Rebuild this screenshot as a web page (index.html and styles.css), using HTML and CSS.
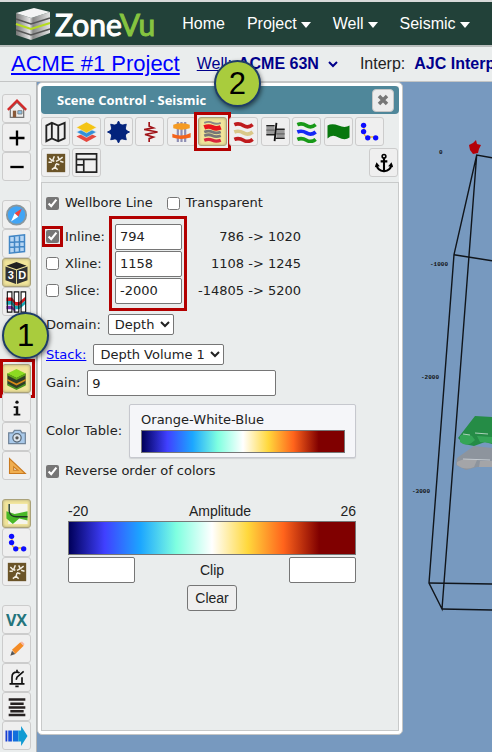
FILE: index.html
```html
<!DOCTYPE html>
<html lang="en">
<head>
    <meta charset="UTF-8">
    <meta name="viewport" content="width=device-width, initial-scale=1.0">
    <title>ZoneVu - ACME #1 Project</title>
    <link rel="stylesheet" href="styles.css">
</head>
<body>
    <!-- Shared icons -->
    <svg class="sprite" aria-hidden="true">
        <symbol id="icon-path" viewBox="0 0 24 24">
            <path d="M6 5v6q0 7 5 7h9" fill="none" stroke="#f0b429" stroke-width="1.6"/>
            <g fill="#0d0dff"><circle cx="5.500" cy="4" r="3.200"/><circle cx="5.500" cy="11.500" r="3.200"/><circle cx="10.500" cy="19" r="3.200"/><circle cx="20" cy="19" r="3.200"/></g>
        </symbol>
        <symbol id="icon-fault" viewBox="0 0 24 24">
            <rect x="1" y="1" width="22" height="22" fill="#6b5428"/>
            <path d="M4 6l3 3 3 1M10 4L8 9M3 11h4M20 5l-4 3-4 2M14 4l2 4M21 11l-4-1M12 13l-1 4-4 3M11 17l3 3M12 13l4 1" fill="none" stroke="#f3eee2" stroke-width="1.800"/>
        </symbol>
    </svg>

    <header class="navbar">
        <a class="logo" href="#">
            <svg width="36" height="34" viewBox="0 0 36 34" aria-hidden="true">
                <defs>
                    <linearGradient id="slab" x1="0" x2="1"><stop offset="0" stop-color="#777"/><stop offset=".4" stop-color="#e4e4e4"/><stop offset=".5" stop-color="#888"/><stop offset="1" stop-color="#e4e4e4"/></linearGradient>
                </defs>
                <path d="M1 6v22l15 5 19-7V5L16 11z" fill="url(#slab)"/>
                <path d="M1 6L19 1l16 4-19 6z" fill="#f4f4f4"/>
                <path d="M1 12l15 5 19-6M1 23l15 5 19-6" fill="none" stroke="#555" stroke-width="1.500"/>
                <path d="M1 17l15 5 19-6" fill="none" stroke="#b5dc1e" stroke-width="2"/>
            </svg>
            <span class="logo-text">Zone<span class="logo-accent">Vu</span></span>
        </a>
        <nav class="menu">
            <a href="#">Home</a>
            <button type="button">Project<span class="caret"></span></button>
            <button type="button">Well<span class="caret"></span></button>
            <button type="button">Seismic<span class="caret"></span></button>
        </nav>
    </header>

    <div class="project-bar">
        <a class="project-link" href="#">ACME #1 Project</a>
        <a class="well-link" href="#">Well:</a>
        <button class="picker" type="button">ACME 63N
            <svg width="12" height="8" viewBox="0 0 12 8" aria-hidden="true"><path d="M2 2l4 4 4-4" fill="none" stroke="#00008b" stroke-width="2"/></svg>
        </button>
        <span class="interp">Interp:</span>
        <button class="picker" type="button">AJC Interp</button>
    </div>

    <main class="workspace">
        <aside class="sidebar" aria-label="Scene tools">
            <div class="tool-group">
                <button class="tool" type="button" aria-label="Home view">
                    <svg viewBox="0 0 24 24"><path d="M4 12v10h16V12l-8-8z" fill="#eee" stroke="#777" stroke-width="1.500"/><path d="M1 13L12 2l11 11" fill="none" stroke="#d32a2a" stroke-width="2.800"/><path d="M7 14h4v8H7z" fill="#8a5a3a"/><path d="M13 14h5v4h-5z" fill="#8cc4e8" stroke="#777"/></svg>
                </button>
                <button class="tool" type="button" aria-label="Zoom in">
                    <svg viewBox="0 0 24 24"><path d="M3 12h18M12 3v18" stroke="#000" stroke-width="2.800"/></svg>
                </button>
                <button class="tool" type="button" aria-label="Zoom out">
                    <svg viewBox="0 0 24 24"><path d="M4 12h16" stroke="#000" stroke-width="2.800"/></svg>
                </button>
            </div>
            <div class="tool-group">
                <button class="tool" type="button" aria-label="Compass">
                    <svg class="wide" viewBox="0 0 24 24"><circle cx="12" cy="12" r="10.500" fill="#42a5f5" stroke="#8a979e" stroke-width="2"/><path d="M18 5l-4 9-4-4z" fill="#f4433c"/><path d="M6 19l4-9 4 4z" fill="#fff"/></svg>
                </button>
                <button class="tool" type="button" aria-label="Section grid">
                    <svg viewBox="0 0 24 24"><path d="M3 3l18-2v20L3 23zM9 3v19M15 2v19M3 10l18-1M3 16l18-1" fill="#b8d6f3" stroke="#4286c5" stroke-width="1.800"/></svg>
                </button>
                <button class="tool active" type="button" aria-label="3D view">
                    <svg class="wide" viewBox="0 0 24 24"><path d="M12 0l11 4-11 4L1 4z" fill="#222"/><path d="M0 5l11.500 4v15L0 20zM24 5L12.500 9v15L24 20z" fill="#2f3133"/><text x="2.500" y="19" class="cube-text">3</text><text x="14" y="19" class="cube-text">D</text></svg>
                </button>
                <button class="tool" type="button" aria-label="Correlation">
                    <svg class="wide" viewBox="0 0 24 24"><path d="M2 1h5v22H2zM9.500 1h5v22h-5zM17 1h5v22h-5z" fill="#fff"/><path d="M1 7h6l4 5h4l7-6v4l-7 6h-4l-4-5H1z" fill="#d4161c"/><path d="M1 11h6l4 5h4l7-6v4l-7 6h-4l-4-5H1z" fill="#18a7b5"/><path d="M1 16h6l4 4v3L7 20H1z" fill="#7b35b0"/><path d="M2 1h5v22H2zM9.500 1h5v22h-5zM17 1h5v22h-5z" fill="none" stroke="#111" stroke-width="1.200"/></svg>
                </button>
            </div>
            <div class="tool-group below-callout">
                <button class="tool active highlight" type="button" aria-label="Scene control">
                    <svg class="wide" viewBox="0 0 24 24"><path d="M2 6v12l10 5 10-5V6z" fill="#2f3d27"/><path d="M2 12l10 5 10-5v2l-10 5-10-5z" fill="#d58918"/><path d="M2 17l10 5 10-5v2l-10 5-10-5z" fill="#4c9420"/><path d="M2 6l10-5 10 5-10 5z" fill="#8cdb21"/><path d="M2 6l10 5 10-5v2l-10 5L2 8z" fill="#64a818"/></svg>
                    <span class="callout callout-1">1</span>
                </button>
                <button class="tool" type="button" aria-label="Info">
                    <svg viewBox="0 0 24 24"><circle cx="12" cy="5" r="2" fill="#111"/><path d="M8 10h5.500v9H16v2H8v-2h2.500v-7H8z" fill="#111"/></svg>
                </button>
                <button class="tool" type="button" aria-label="Snapshot">
                    <svg viewBox="0 0 24 24"><path d="M2 7h5l2-3h7l2 3h4v13H2z" fill="#a9c9ea" stroke="#71859a" stroke-width="1.500"/><circle cx="12" cy="13" r="5" fill="#dbe4ec" stroke="#596978" stroke-width="1.500"/><circle cx="12" cy="13" r="2" fill="#555"/></svg>
                </button>
                <button class="tool" type="button" aria-label="Measure">
                    <svg viewBox="0 0 24 24"><path d="M3 3v18h19zM8 13v4h5z" fill="#f0ae50" stroke="#ca7a20" stroke-width="1.300" fill-rule="evenodd"/></svg>
                </button>
            </div>
            <div class="tool-group">
                <button class="tool active" type="button" aria-label="Surfaces">
                    <svg class="wide" viewBox="0 0 24 24"><path d="M3 1h21v22H3z" fill="#f5f4ec"/><path d="M1 9l9 3 14-3v10l-9-2-7 6-7-6z" fill="#49b828"/><path d="M4 1v8q1 6 8 6h12" fill="none" stroke="#1f3824" stroke-width="1.500"/></svg>
                </button>
                <button class="tool" type="button" aria-label="Well path"><svg><use href="#icon-path"/></svg></button>
                <button class="tool" type="button" aria-label="Faults"><svg><use href="#icon-fault"/></svg></button>
            </div>
            <div class="tool-group">
                <button class="tool vx" type="button">VX</button>
                <button class="tool" type="button" aria-label="Edit">
                    <svg viewBox="0 0 24 24"><path d="M4 20l2-6 4 4z" fill="#555"/><path d="M6 13L16 4l4 4-10 10z" fill="#f48b25"/><path d="M16 4l2-1 3 3-1 2z" fill="#f6b6a8"/></svg>
                </button>
                <button class="tool" type="button" aria-label="Alerts">
                    <svg viewBox="0 0 24 24"><path d="M3 19h18M6 19v-8q0-6 6-6 2 0 3 1M18 11v8M12 2v3M10 22h4M11 14l1-3 8-7" fill="none" stroke="#111" stroke-width="2"/></svg>
                </button>
                <button class="tool" type="button" aria-label="Layers list">
                    <svg viewBox="0 0 24 24"><path d="M2 3h20M4 8h16M2 12.500h20M4 17h16M2 21.500h20" stroke="#272222" stroke-width="3"/></svg>
                </button>
                <button class="tool" type="button" aria-label="Play forward">
                    <svg class="wide" viewBox="0 0 24 24"><path d="M0 6h2v12H0z" fill="#1a3ed0"/><path d="M3 6h4v12H3z" fill="#174ddd"/><path d="M8 6h6v12H8z" fill="#126fdc"/><path d="M14 6h3V1l7 11-7 11v-5h-3z" fill="#119bd3"/></svg>
                </button>
            </div>
        </aside>

        <div class="scene">
            <svg class="scene-view" width="89" height="670" viewBox="0 0 89 670" role="img" aria-label="3D scene">
                <path d="M66 63l4-2 3-3 1 4 4 1-2 4-1 4-5 1-3-4z" fill="#b50008"/>
                <g fill="none" stroke="#10151b" stroke-width="1.400">
                    <path d="M89 75.700L73.700 73 51 172.700 26 501l13 26L73.700 73"/>
                    <path d="M51 172.700l38 6M26 501l63 1M39 527l50 1"/>
                </g>
                <path d="M72 334l17 1v27l-7-2-11 4-10-2-6-6z" fill="#258c46"/>
                <path d="M57 354q5-4 12 0l3 4q-8 8-15 2zM74 354l15 1v6l-12-1z" fill="#35a557"/>
                <path d="M60 352l7 1M72 351l13 1" stroke="#a9d0b8" stroke-width="1"/>
                <path d="M71 364l18 2v19l-15 0-11 3-10-5 1-7z" fill="#8d949d"/>
                <path d="M54 380q8-5 20-2l-3 7q-9 4-17-2zM77 379h12v6H76z" fill="#a4a5a8"/>
                <path d="M60 377l27 1" stroke="#c4cad0" stroke-width="1"/>
                <g class="depth-label">
                    <text x="36" y="72">0</text>
                    <text x="27" y="184">-1000</text>
                    <text x="18" y="297">-2000</text>
                    <text x="9" y="411">-3000</text>
                </g>
            </svg>

            <section class="panel" aria-labelledby="panelTitle">
                <div class="panel-title">
                    <h2 id="panelTitle">Scene Control - Seismic</h2>
                    <button class="close" type="button" aria-label="Close">
                        <svg width="12" height="12" viewBox="0 0 12 12"><path d="M2 2l8 8M10 2l-8 8" stroke="#777" stroke-width="3.500"/></svg>
                    </button>
                </div>

                <div class="toolbar">
                    <button class="tool" type="button" aria-label="Map">
                        <svg class="wide" viewBox="0 0 24 24"><path d="M2 5l6-3 7 3 7-3v17l-7 3-7-3-6 3zM8 2v17M15 5v17" fill="none" stroke="#222" stroke-width="2"/></svg>
                    </button>
                    <button class="tool" type="button" aria-label="Layers">
                        <svg class="wide" viewBox="0 0 24 24"><path d="M1 17l11-5 11 5-11 6z" fill="#e5483f"/><path d="M1 12l11-5 11 5-11 6z" fill="#3290d8" stroke="#f0f0f0" stroke-width=".6"/><path d="M1 7l11-6 11 6-11 6z" fill="#f4c414" stroke="#f0f0f0" stroke-width=".6"/></svg>
                    </button>
                    <button class="tool" type="button" aria-label="Settings">
                        <svg class="wide" viewBox="0 0 24 24"><circle cx="12" cy="12" r="9" fill="#03237c"/><path d="M12 0l2 4h-4zM12 24l2-4h-4zM0 12l4-2v4zM24 12l-4-2v4zM3.500 3.500l4.500 1L4.500 8zM20.500 3.500L16 4.500 19.500 8zM3.500 20.500l1-4.500L8 19.500zM20.500 20.500l-1-4.500-3.500 3.500z" fill="#03237c" stroke="#03237c"/></svg>
                    </button>
                    <button class="tool" type="button" aria-label="Seismic wiggle">
                        <svg viewBox="0 0 24 24"><path d="M11 0v5l5 2-11 2 16 3-15 3 10 3-5 2v4" fill="none" stroke="#a01318" stroke-width="2"/></svg>
                    </button>
                    <button class="tool" type="button" aria-label="Wells">
                        <svg class="wide" viewBox="0 0 24 24"><path d="M8 1v22M12 1v22M16 1v22" stroke="#8f8fb5" stroke-width="2.400"/><path d="M3 4q9-3 18 0v4q-9 3-18 0z" fill="#f59b23"/><path d="M2 14q10 4 20-1v5q-11 3-20 0z" fill="#f5641b"/></svg>
                    </button>
                    <button class="tool active highlight" type="button" aria-label="Seismic">
                        <svg class="wide" viewBox="0 0 24 24"><path d="M3 2q5-2 9 0t9 0" fill="none" stroke="#888" stroke-width="2"/><path d="M3 7q5-2 9 0t9 0" fill="none" stroke="#e8141c" stroke-width="5"/><path d="M3 12q5-2 9 0t9 0M3 16q5-2 9 0t9 0" fill="none" stroke="#777" stroke-width="3"/><path d="M3 21q5-2 9 0t9 0" fill="none" stroke="#d8253c" stroke-width="3.500"/></svg>
                        <span class="callout callout-2">2</span>
                    </button>
                    <button class="tool" type="button" aria-label="Horizons">
                        <svg class="wide" viewBox="0 0 24 24"><g fill="none" stroke-width="4"><path d="M2 4q5-2 10 1t10-1M2 20q5-2 10 1t10-1" stroke="#bf1b1d"/><path d="M2 12q5-2 10 1t10-1" stroke="#dac889"/></g></svg>
                    </button>
                    <button class="tool" type="button" aria-label="Fault offset">
                        <svg class="wide" viewBox="0 0 24 24"><path d="M2 5h9v10H2zM13 9h9v10h-9z" fill="#999"/><path d="M2 5h9M2 15h10M12 9h10M12 19h10" stroke="#222" stroke-width="1.500"/><path d="M2 10h9M13 14h9" stroke="#666" stroke-width="1.500"/><path d="M13 2l-2 20" stroke="#111" stroke-width="2"/></svg>
                    </button>
                    <button class="tool" type="button" aria-label="Formations">
                        <svg class="wide" viewBox="0 0 24 24"><g fill="none" stroke-width="4"><path d="M2 4q5-2 10 1t10-1M2 20q5-2 10 1t10-1" stroke="#189918"/><path d="M2 12q5-2 10 1t10-1" stroke="#1429f5"/></g></svg>
                    </button>
                    <button class="tool" type="button" aria-label="Geomodel">
                        <svg class="wide" viewBox="0 0 24 24"><path d="M0 5q5-3 12 0t12 0v13q-5 4-12 0t-12 1z" fill="#08780e"/></svg>
                    </button>
                    <button class="tool" type="button" aria-label="Well path"><svg><use href="#icon-path"/></svg></button>
                </div>
                <div class="toolbar second-row">
                    <button class="tool" type="button" aria-label="Faults"><svg><use href="#icon-fault"/></svg></button>
                    <button class="tool" type="button" aria-label="Layout">
                        <svg class="wide" viewBox="0 0 24 24"><path d="M1 2h22v20H1zM1 8h22M9 8v14M1 14h8" fill="none" stroke="#222" stroke-width="1.800"/></svg>
                    </button>
                    <button class="tool anchor" type="button" aria-label="Anchor panel">
                        <svg viewBox="0 0 24 24"><circle cx="12" cy="4" r="2.200" fill="none" stroke="#000" stroke-width="2"/><path d="M12 6v15M8 10h8M3 14q1 7 9 8 8-1 9-8" fill="none" stroke="#000" stroke-width="2.500"/><path d="M1 17l2-6 4 5zM23 17l-2-6-4 5z"/></svg>
                    </button>
                </div>

                <form class="settings">
                    <div class="row checks">
                        <label><input type="checkbox" checked>Wellbore Line</label>
                        <label><input type="checkbox">Transparent</label>
                    </div>

                    <div class="slices">
                        <div class="slice-row">
                            <label><span class="tick highlight"><input type="checkbox" checked></span>Inline:</label>
                            <input class="field" type="text" value="794" aria-label="Inline number">
                            <span class="range">786 -&gt; 1020</span>
                        </div>
                        <div class="slice-row">
                            <label><span class="tick"><input type="checkbox"></span>Xline:</label>
                            <input class="field" type="text" value="1158" aria-label="Xline number">
                            <span class="range">1108 -&gt; 1245</span>
                        </div>
                        <div class="slice-row">
                            <label><span class="tick"><input type="checkbox"></span>Slice:</label>
                            <input class="field" type="text" value="-2000" aria-label="Slice depth">
                            <span class="range">-14805 -&gt; 5200</span>
                        </div>
                        <span class="slices-box"></span>
                    </div>

                    <div class="row domain">
                        <label for="domain">Domain:</label>
                        <select id="domain"><option>Depth</option><option>Time</option></select>
                    </div>
                    <div class="row stack">
                        <label for="stack"><a href="#">Stack:</a></label>
                        <select id="stack"><option>Depth Volume 1</option></select>
                    </div>
                    <div class="row gain">
                        <label for="gain">Gain:</label>
                        <input id="gain" class="field" type="text" value="9">
                    </div>
                    <div class="row">
                        <span>Color Table:</span>
                        <button class="color-table" type="button">Orange-White-Blue<span class="ramp"></span></button>
                    </div>
                    <div class="row reverse">
                        <label><input type="checkbox" checked>Reverse order of colors</label>
                    </div>

                    <div class="amplitude">
                        <div class="scale"><span>-20</span><span>Amplitude</span><span>26</span></div>
                        <div class="ramp"></div>
                        <div class="clip">
                            <input class="field" type="text" aria-label="Clip minimum">
                            <span>Clip</span>
                            <input class="field" type="text" aria-label="Clip maximum">
                        </div>
                        <button class="clear" type="button">Clear</button>
                    </div>
                </form>
            </section>
        </div>
    </main>
</body>
</html>
```

FILE: styles.css
```css
* {
    box-sizing: border-box;
}

body {
    margin: 0;
    min-height: 100vh;
    display: flex;
    flex-direction: column;
    overflow-x: hidden;
    border-top: 2px solid #d8dada;
    background: #eaeded;
    font-family: "Liberation Sans", Arial, sans-serif;
    font-size: 16px;
    color: #222;
}

button,
input,
select {
    font: inherit;
    color: inherit;
    margin: 0;
}

.sprite {
    position: absolute;
    width: 0;
    height: 0;
}

/* Navigation */
.navbar {
    display: flex;
    align-items: center;
    gap: 27px;
    height: 45px;
    padding-left: 15px;
    background: #224139;
    border-bottom: 2px solid #b9bdbc;
    overflow: hidden;
}

.logo {
    display: flex;
    align-items: center;
    gap: 4px;
    text-decoration: none;
    flex: none;
}

.logo-text {
    font: 30px/38px Lato, sans-serif;
    color: #fff;
    -webkit-text-stroke: 1px #fff;
}

.logo-accent {
    color: #86c440;
    -webkit-text-stroke: 1px #86c440;
}

.menu {
    display: flex;
    gap: 22px;
    flex: none;
}

.menu a,
.menu button {
    display: flex;
    align-items: center;
    gap: 4px;
    padding: 0;
    border: 0;
    background: none;
    color: #fff;
    line-height: 20px;
    text-decoration: none;
}

.caret {
    margin-top: 3px;
    border: 5px solid transparent;
    border-top: 6px solid #fff;
    border-bottom: 0;
}

/* Project bar */
.project-bar {
    display: flex;
    align-items: center;
    height: 35px;
    padding-left: 11px;
    border-bottom: 1px solid #c3c5c5;
    white-space: nowrap;
    overflow: hidden;
}

.project-link {
    margin-right: 17px;
    font-size: 22px;
    line-height: 32px;
    color: #00f;
}

.well-link {
    margin-right: 6px;
    color: #00008b;
}

.picker {
    flex: none;
    display: flex;
    align-items: center;
    gap: 8px;
    padding: 0;
    border: 0;
    background: none;
    color: #00008b;
    font-weight: bold;
}

.interp {
    margin: 0 9px 0 21px;
}

/* Workspace */
.workspace {
    flex: 1;
    display: flex;
}

.sidebar {
    flex: none;
    width: 37px;
    padding: 12px 0 0 2px;
    border-right: 1px solid #b4b6b6;
}

.tool-group {
    display: flex;
    flex-direction: column;
    margin-bottom: 19px;
}

.tool-group:last-child {
    margin-bottom: 0;
}

.below-callout {
    margin-top: 48px;
}

.tool {
    position: relative;
    flex: none;
    display: flex;
    align-items: center;
    justify-content: center;
    width: 29px;
    height: 29px;
    padding: 0;
    border: 1px solid #ccc;
    border-radius: 3px;
    background: #efefef;
}

.tool svg {
    width: 20px;
    height: 20px;
}

.tool svg.wide {
    width: 23px;
    height: 22px;
}

.tool.active {
    border: 1px solid #aaa27a;
    background: #f1e59a;
    box-shadow: inset 0 0 3px #aaa27a;
}

.cube-text {
    font: bold 12px "Liberation Sans", Arial, sans-serif;
    fill: #fff;
}

.vx {
    font: bold 16px "Open Sans", sans-serif;
    color: #24747c;
}

.highlight::after {
    content: "";
    position: absolute;
    inset: -6px -5px;
    border: 3px solid #b30000;
}

.sidebar .highlight::after {
    left: -3px;
}

/* Numbered callouts */
.callout {
    position: absolute;
    z-index: 2;
    display: flex;
    align-items: center;
    justify-content: center;
    width: 47px;
    height: 47px;
    border: 2px solid #1f3d68;
    border-radius: 50%;
    background: #a9cc3d;
    box-shadow: 1px 2px 4px rgba(0, 0, 0, 0.5);
    font: 31px "Liberation Sans", Arial, sans-serif;
    color: #000;
}

.callout-1 {
    left: -1px;
    bottom: 33px;
}

.callout-2 {
    left: 15px;
    bottom: 38px;
}

/* 3D scene */
.scene {
    position: relative;
    flex: 1;
    min-width: 0;
    background: #7799bf;
}

.scene-view {
    position: absolute;
    left: 366px;
    top: 0;
}

.depth-label {
    font: bold 6px "Liberation Mono", monospace;
    fill: #111;
}

/* Control panel */
.panel {
    position: relative;
    width: 366px;
    padding: 3px;
    border: 1px solid #c3c5c5;
    border-radius: 5px;
    background: #eaeded;
    box-shadow: inset 0 0 0 3px #fff;
}

.panel-title {
    display: flex;
    align-items: center;
    justify-content: space-between;
    height: 28px;
    padding: 0 5px 0 16px;
    border-radius: 4px;
    background: #4f879a;
}

.panel-title h2 {
    margin: 0;
    font: bold 13px "Open Sans", sans-serif;
    color: #fff;
}

.close {
    display: flex;
    align-items: center;
    justify-content: center;
    width: 22px;
    height: 23px;
    padding: 0;
    border: 1px solid #c5c5c5;
    border-radius: 4px;
    background: #ededed;
}

.toolbar {
    display: flex;
    justify-content: space-between;
    margin: 3px 15px 2px 0;
}

.second-row {
    justify-content: flex-start;
    gap: 2px;
    margin-top: 2px;
    margin-right: 1px;
}

.anchor {
    margin-left: auto;
}

.settings {
    min-height: 549px;
    margin-top: 5px;
    padding: 10px 42px 0 4px;
    border: 1px solid #c8caca;
    font: 13px/20px "DejaVu Sans", Verdana, sans-serif;
}

.row {
    display: flex;
    align-items: center;
    gap: 7px;
}

.settings label {
    display: flex;
    align-items: center;
    gap: 6px;
}

.settings input[type="checkbox"] {
    display: block;
    width: 13px;
    height: 13px;
    accent-color: #767676;
}

.settings .checks {
    gap: 14px;
}

.field {
    width: 67px;
    height: 26px;
    padding: 0 4px;
    border: 1px solid #767676;
    border-radius: 2px;
    background: #fff;
}

.slices {
    position: relative;
    width: 255px;
    margin-top: 10px;
}

.slice-row {
    display: grid;
    grid-template-columns: 69px 67px 1fr;
    align-items: center;
    height: 27px;
}

.range {
    text-align: right;
    white-space: nowrap;
}

.tick {
    position: relative;
}

.tick.highlight::after {
    inset: -4px;
}

.slices-box {
    position: absolute;
    left: 63px;
    top: -7px;
    width: 78px;
    height: 95px;
    border: 3px solid #b30000;
    pointer-events: none;
}

.settings select {
    height: 21px;
    padding: 0 2px;
    border: 1px solid #767676;
    border-radius: 2px;
    background: #fff;
}

.domain {
    margin-top: 10px;
}

.stack {
    margin-top: 9px;
}

.stack a {
    color: #00f;
}

.gain {
    margin: 5px 0 8px;
}

.gain .field {
    width: 189px;
}

.color-table {
    flex: 1;
    padding: 5px 10px 4px 11px;
    border: 1px solid #c6c8ce;
    border-radius: 2px;
    background: #f5f6f9;
    box-shadow: 0 1px 1px #d0d2d4;
    text-align: left;
}

.ramp {
    display: block;
    height: 23px;
    border: 1px solid #777;
    background: linear-gradient(to right, #00005a, #4040ff, #1ca6ff, #7fffe0, #fff, #ffd83c, #ff641c, #800000, #800000);
}

.reverse {
    margin-top: 3px;
}

.amplitude {
    margin: 20px 0 0 22px;
    font: 14px/20px "Liberation Sans", Arial, sans-serif;
}

.scale,
.clip {
    display: flex;
    align-items: center;
    justify-content: space-between;
}

.scale span {
    flex: 1;
}

.scale span:nth-child(2) {
    padding-left: 16px;
    text-align: center;
}

.scale span:last-child {
    text-align: right;
}

.amplitude .ramp {
    height: 34px;
    margin-bottom: 2px;
}

.clear {
    display: block;
    width: 50px;
    height: 26px;
    margin: 2px auto 0;
    padding: 0;
    border: 1px solid #767676;
    border-radius: 3px;
    background: #efefef;
}
```
